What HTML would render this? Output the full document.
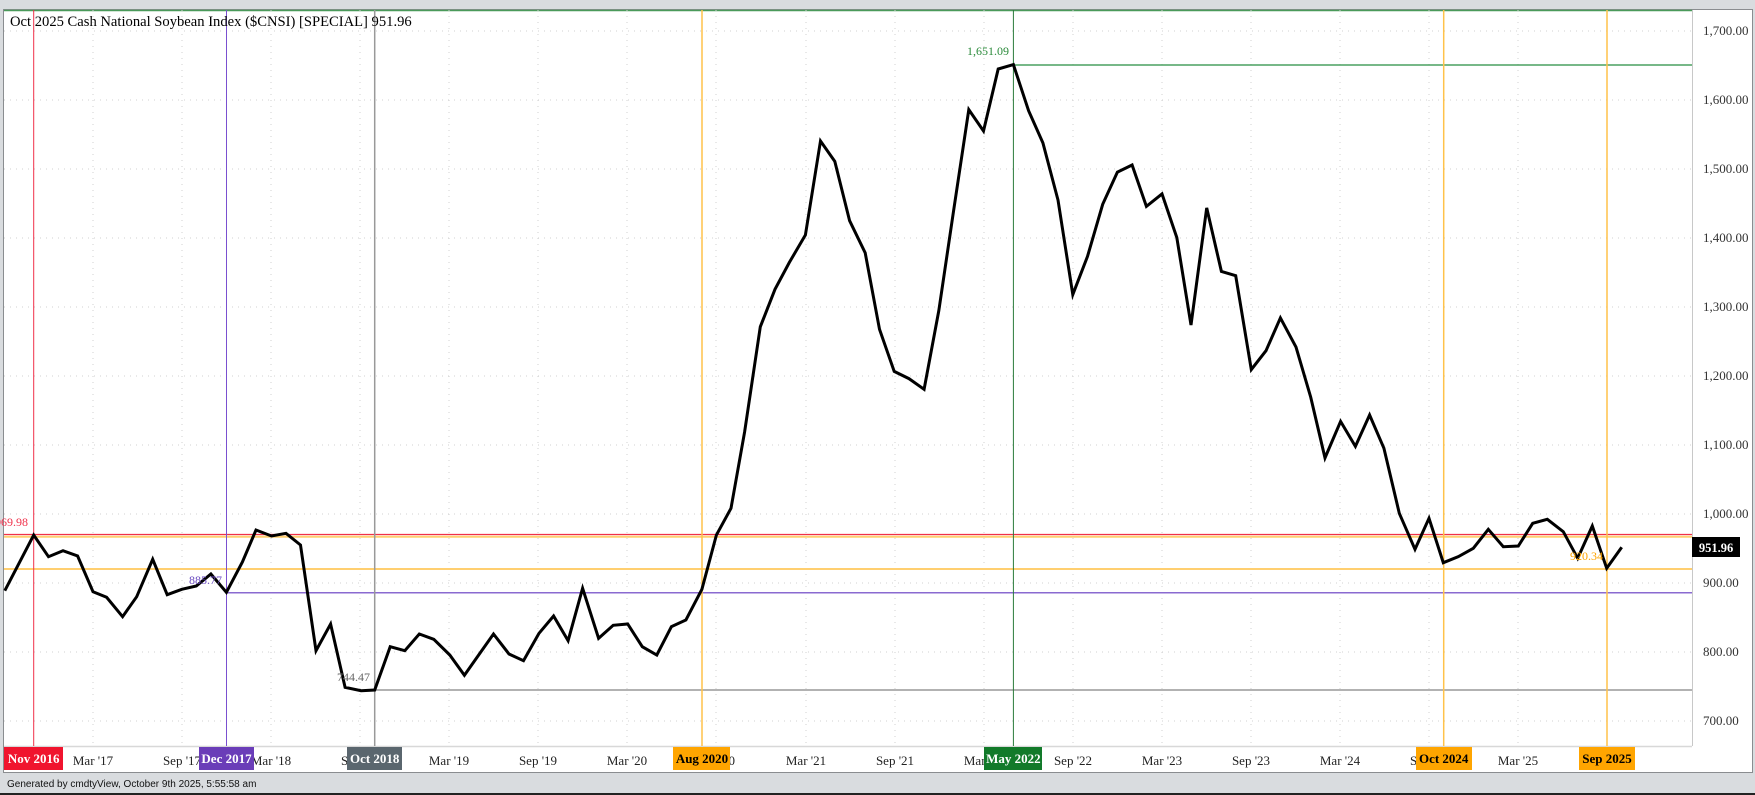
<!DOCTYPE html>
<html><head><meta charset="utf-8"><style>
html,body{margin:0;padding:0;background:#d9dcdf;width:1755px;height:795px;overflow:hidden}
svg{display:block}
</style></head><body>
<svg width="1755" height="795" xmlns="http://www.w3.org/2000/svg" font-family="'Liberation Serif', serif">
<rect x="0" y="0" width="1755" height="795" fill="#d9dcdf"/>
<rect x="3.5" y="9.5" width="1749" height="763" fill="#fff" stroke="#8a8d90"/>
<line x1="4" y1="10.5" x2="1692" y2="10.5" stroke="#4a9a5a" stroke-width="1.5"/>
<line x1="1692.5" y1="10" x2="1692.5" y2="746" stroke="#c8c8c8"/>
<line x1="4" y1="746.5" x2="1692" y2="746.5" stroke="#d8d8d8" stroke-width="1.5"/>
<g stroke="#d0d0d0" stroke-dasharray="1,5">
<line x1="4" x2="1692" y1="31" y2="31"/><line x1="4" x2="1692" y1="100" y2="100"/><line x1="4" x2="1692" y1="169" y2="169"/><line x1="4" x2="1692" y1="238" y2="238"/><line x1="4" x2="1692" y1="307" y2="307"/><line x1="4" x2="1692" y1="376" y2="376"/><line x1="4" x2="1692" y1="445" y2="445"/><line x1="4" x2="1692" y1="514" y2="514"/><line x1="4" x2="1692" y1="583" y2="583"/><line x1="4" x2="1692" y1="652" y2="652"/><line x1="4" x2="1692" y1="721" y2="721"/>
<line y1="10" y2="746" x1="93" x2="93"/><line y1="10" y2="746" x1="182" x2="182"/><line y1="10" y2="746" x1="271" x2="271"/><line y1="10" y2="746" x1="360" x2="360"/><line y1="10" y2="746" x1="449" x2="449"/><line y1="10" y2="746" x1="538" x2="538"/><line y1="10" y2="746" x1="627" x2="627"/><line y1="10" y2="746" x1="716" x2="716"/><line y1="10" y2="746" x1="806" x2="806"/><line y1="10" y2="746" x1="895" x2="895"/><line y1="10" y2="746" x1="984" x2="984"/><line y1="10" y2="746" x1="1073" x2="1073"/><line y1="10" y2="746" x1="1162" x2="1162"/><line y1="10" y2="746" x1="1251" x2="1251"/><line y1="10" y2="746" x1="1340" x2="1340"/><line y1="10" y2="746" x1="1429" x2="1429"/><line y1="10" y2="746" x1="1518" x2="1518"/><line y1="10" y2="746" x1="1607" x2="1607"/>
</g>
<line x1="4" x2="1692" y1="536.7" y2="536.7" stroke="#ffcf70" stroke-width="2"/>
<line x1="4" x2="1692" y1="534.5" y2="534.5" stroke="#f0304a" stroke-width="1.2"/>
<line x1="4" x2="1692" y1="569" y2="569" stroke="#ffcf70" stroke-width="2"/>
<line x1="226.5" x2="1692" y1="592.7" y2="592.7" stroke="#8a6ad0" stroke-width="1.5"/>
<line x1="375" x2="1692" y1="690" y2="690" stroke="#999" stroke-width="1.5"/>
<line x1="1013.4" x2="1692" y1="65" y2="65" stroke="#4aa060" stroke-width="1.5"/>
<line x1="33.7" x2="33.7" y1="10" y2="746" stroke="#f0304a" stroke-width="1"/>
<line x1="226.5" x2="226.5" y1="10" y2="746" stroke="#7a50d0" stroke-width="1"/>
<line x1="374.7" x2="374.7" y1="10" y2="746" stroke="#999" stroke-width="1.5"/>
<line x1="702" x2="702" y1="10" y2="746" stroke="#ffc24a" stroke-width="1.5"/>
<line x1="1013.4" x2="1013.4" y1="10" y2="746" stroke="#2a7a3a" stroke-width="1"/>
<line x1="1443.7" x2="1443.7" y1="10" y2="746" stroke="#ffc24a" stroke-width="1.5"/>
<line x1="1607" x2="1607" y1="10" y2="746" stroke="#ffc24a" stroke-width="1.5"/>
<polyline fill="none" stroke="#000" stroke-width="3" stroke-linejoin="miter" points="4.8,590.7 33.7,535 48.5,556.7 63,550.7 77.6,556 93,591.7 106.6,597.3 122.6,616.7 136.7,596.7 152.7,559.3 167.2,594.7 181.8,589.3 196.3,586 210.9,574 226.4,592.3 242.4,562 256,530 271.5,536 286,533.3 300.5,545 316,650.7 330.6,624 345.1,687.3 361.1,690.7 374.7,690 390.2,646.7 404.8,650.7 419.3,634 433.8,639.3 449.8,655 464.4,675.3 479.9,653.3 493.5,634 509,654 523.5,660.7 539,633.3 553.6,616 568.1,640.7 582.6,588.3 598.6,638.3 613.2,625.3 627.7,624 642.3,646.7 656.8,655 671.4,626.7 685.9,620 701.9,589.3 716.4,535 731,508.3 744.6,432 760.3,326.8 775,289.3 789.3,262.5 805.4,235 820.5,141 834.8,161.4 849.6,220.7 865.2,252.9 879.5,329.3 894.2,371.4 908.9,378.6 924.1,389.3 938.8,310.7 953.6,210.7 968.8,109.6 983.5,131 998.2,69 1013.4,64.6 1028.6,110.7 1042.9,142.9 1058,200 1072.8,294.6 1087.5,256.4 1102.7,204.3 1117.4,172.1 1132.1,165 1146.4,206.4 1162,193.9 1176.8,237.5 1191,325 1206.7,207.9 1221.4,271.4 1235.7,275.7 1251.3,369.6 1266,350.7 1280.4,317.9 1296,347.1 1310.7,397.1 1325,457.9 1340.6,421.4 1355.4,446.4 1369.6,415 1383.9,448.2 1399.3,513.3 1415,549.3 1429,518.3 1443.3,562.7 1458.3,556.7 1473.3,548.3 1488.3,529.3 1503.3,546.7 1518.3,546 1532.7,523.3 1547.3,519.3 1563.3,531.7 1577.7,558.3 1592.3,526 1606.7,568.3 1621.7,547.3"/>
<g font-size="12">
<text x="-5" y="526" fill="#f0304a">969.98</text>
<text x="189" y="584" fill="#6a4ac0">885.77</text>
<text x="337" y="681" fill="#666">744.47</text>
<text x="967" y="55" fill="#2a8a3a">1,651.09</text>
<text x="1570" y="560" fill="#ffa500">920.34</text>
</g>
<text x="10" y="26" font-size="14.6" fill="#000">Oct 2025 Cash National Soybean Index ($CNSI) [SPECIAL] 951.96</text>
<g font-size="13" fill="#333">
<text x="1703" y="35">1,700.00</text><text x="1703" y="104">1,600.00</text><text x="1703" y="173">1,500.00</text><text x="1703" y="242">1,400.00</text><text x="1703" y="311">1,300.00</text><text x="1703" y="380">1,200.00</text><text x="1703" y="449">1,100.00</text><text x="1703" y="518">1,000.00</text><text x="1703" y="587">900.00</text><text x="1703" y="656">800.00</text><text x="1703" y="725">700.00</text>
</g>
<rect x="1692" y="537" width="48" height="20" fill="#000"/>
<text x="1716" y="552" font-size="12.5" font-weight="bold" fill="#fff" text-anchor="middle">951.96</text>
<g font-size="13" fill="#222" text-anchor="middle">
<text x="93" y="765">Mar '17</text><text x="182" y="765">Sep '17</text><text x="271" y="765">Mar '18</text><text x="360" y="765">Sep '18</text><text x="449" y="765">Mar '19</text><text x="538" y="765">Sep '19</text><text x="627" y="765">Mar '20</text><text x="716" y="765">Sep '20</text><text x="806" y="765">Mar '21</text><text x="895" y="765">Sep '21</text><text x="984" y="765">Mar '22</text><text x="1073" y="765">Sep '22</text><text x="1162" y="765">Mar '23</text><text x="1251" y="765">Sep '23</text><text x="1340" y="765">Mar '24</text><text x="1429" y="765">Sep '24</text><text x="1518" y="765">Mar '25</text>
</g>
<g font-size="13" font-weight="bold" text-anchor="middle">
<rect x="4" y="747" width="59" height="23" fill="#f0142e"/><text x="33.7" y="763" fill="#fff">Nov 2016</text>
<rect x="199" y="747" width="55" height="23" fill="#6a3db8"/><text x="226.5" y="763" fill="#fff">Dec 2017</text>
<rect x="347" y="747" width="55" height="23" fill="#5a666e"/><text x="374.7" y="763" fill="#fff">Oct 2018</text>
<rect x="673" y="747" width="57" height="23" fill="#ffa500"/><text x="702" y="763" fill="#000">Aug 2020</text>
<rect x="984" y="747" width="58" height="23" fill="#127a2a"/><text x="1013.4" y="763" fill="#fff">May 2022</text>
<rect x="1416" y="747" width="56" height="23" fill="#ffa500"/><text x="1443.7" y="763" fill="#000">Oct 2024</text>
<rect x="1579" y="747" width="56" height="23" fill="#ffa500"/><text x="1607" y="763" fill="#000">Sep 2025</text>
</g>
<text x="7" y="787" font-family="'Liberation Sans', sans-serif" font-size="10" fill="#111">Generated by cmdtyView, October 9th 2025, 5:55:58 am</text>
<rect x="0" y="793" width="1755" height="2" fill="#222"/>
</svg>
</body></html>
